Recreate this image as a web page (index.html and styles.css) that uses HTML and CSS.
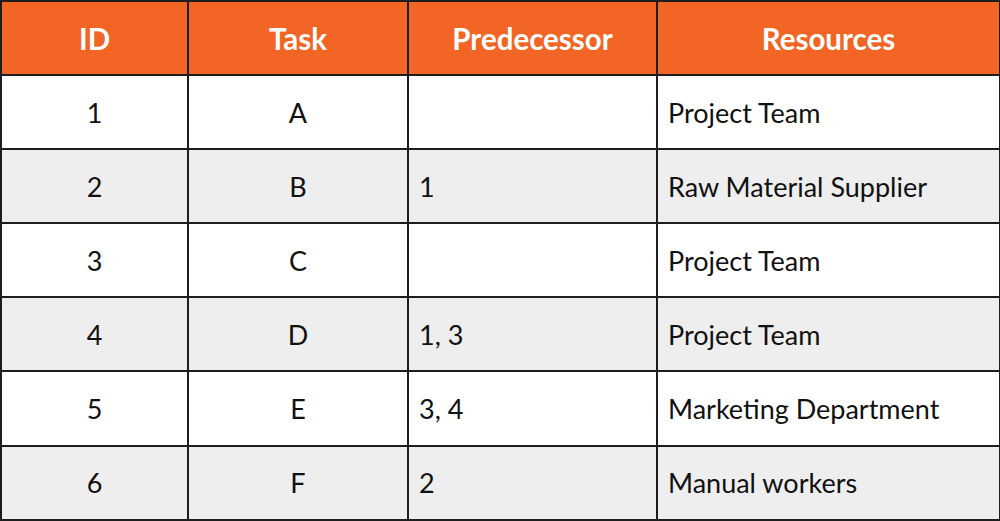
FILE: index.html
```html
<!DOCTYPE html>
<html>
<head>
<meta charset="utf-8">
<link rel="stylesheet" href="styles.css">
</head>
<body>
<table class="plan">
  <colgroup>
    <col class="c-id"><col class="c-task"><col class="c-pred"><col class="c-res">
  </colgroup>
  <thead>
    <tr><th>ID</th><th>Task</th><th>Predecessor</th><th>Resources</th></tr>
  </thead>
  <tbody>
    <tr><td class="ctr">1</td><td class="ctr">A</td><td></td><td>Project Team</td></tr>
    <tr class="alt"><td class="ctr">2</td><td class="ctr">B</td><td>1</td><td>Raw Material Supplier</td></tr>
    <tr><td class="ctr">3</td><td class="ctr">C</td><td></td><td>Project Team</td></tr>
    <tr class="alt"><td class="ctr">4</td><td class="ctr">D</td><td>1, 3</td><td>Project Team</td></tr>
    <tr><td class="ctr">5</td><td class="ctr">E</td><td>3, 4</td><td>Marketing Department</td></tr>
    <tr class="alt"><td class="ctr">6</td><td class="ctr">F</td><td>2</td><td>Manual workers</td></tr>
  </tbody>
</table>
</body>
</html>
```

FILE: styles.css
```css
html, body {
  margin: 0;
  padding: 0;
  background: #ffffff;
}
body {
  font-family: Lato, "Open Sans", sans-serif;
}
.plan {
  border-collapse: collapse;
  width: 999px;
  table-layout: fixed;
}
.c-id { width: 187px; }
.c-task { width: 220px; }
.c-pred { width: 249px; }
.c-res { width: 343px; }
.plan th, .plan td {
  border: 2px solid #1e1e1e;
  padding: 0 10px;
  height: 74.1px;
  box-sizing: border-box;
}
.plan th {
  background: #f26524;
  color: #ffffff;
  font-weight: 700;
  font-size: 29.5px;
  text-align: center;
}
.plan td {
  font-size: 27px;
  color: #111111;
  text-align: left;
  background: #ffffff;
}
.plan td.ctr {
  text-align: center;
}
.plan tr.alt td {
  background: #eeeeee;
}
```
